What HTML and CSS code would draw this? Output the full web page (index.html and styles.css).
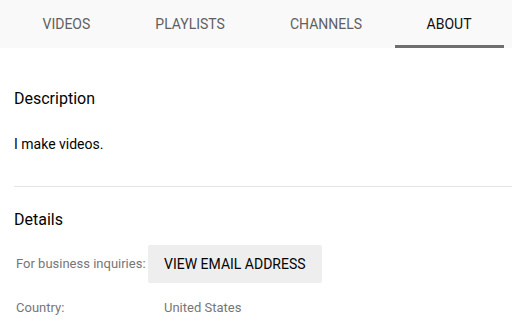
FILE: index.html
```html
<!DOCTYPE html>
<html lang="en">
<head>
  <meta charset="UTF-8" />
  <meta name="viewport" content="width=device-width, initial-scale=1.0">
  <title>About</title>

  <link rel="stylesheet" href="styles.css">
</head>

<body>

  <div class="tabs">
    <div class="tab">Videos</div>
    <div class="tab">Playlists</div>
    <div class="tab">Channels</div>
    <div class="tab active">About</div>
  </div>

  <div class="about">
    <h2 class="section-title">Description</h2>
    <p class="description">I make videos.</p>

    <hr class="divider">

    <h2 class="section-title details-title">Details</h2>
    <div class="details">
      <div class="label">For business inquiries:</div>
      <div class="value"><button class="email-btn">View email address</button></div>

      <div class="label">Country:</div>
      <div class="value text">United States</div>
    </div>
  </div>

</body>
</html>
```

FILE: styles.css
```css
body {
  background-color: white;
  margin: 0;
  padding: 0;
  font-family: Roboto, "Liberation Sans", Arial, sans-serif;
  color: #030303;
}

.tabs {
  display: flex;
  height: 48px;
  padding-left: 10px;
  background-color: #f9f9f9;
}

.tab {
  display: flex;
  align-items: center;
  justify-content: center;
  padding: 0 32.5px;
  font-size: 14px;
  text-transform: uppercase;
  color: #606060;
  border-bottom: 3px solid transparent;
  box-sizing: border-box;
  padding-top: 2px;
}

.tab.active {
  color: #0f0f0f;
  border-bottom-color: #6f6f6f;
  padding-left: 32px;
  padding-right: 32px;
}

.about {
  padding: 41px 0 0 14px;
}

.section-title {
  margin: 0;
  font-size: 16px;
  font-weight: 400;
  line-height: 20px;
}

.description {
  margin: 25px 0 0;
  font-size: 14px;
  line-height: 20px;
}

.divider {
  margin: 32px 0 0;
  border: 0;
  border-top: 1px solid #e5e5e5;
}

.details-title {
  margin-top: 23px;
}

.details {
  display: grid;
  grid-template-columns: 132px auto;
  align-items: center;
  row-gap: 15px;
  margin-top: 15px;
  padding-left: 2px;
  font-size: 13px;
  line-height: 20px;
}

.label {
  color: #767676;
}

.value.text {
  padding-left: 16px;
  color: #767676;
}

.email-btn {
  height: 38px;
  padding: 0 16px;
  border: 0;
  border-radius: 2px;
  background-color: #eeeeee;
  font-family: inherit;
  font-size: 14px;
  text-transform: uppercase;
  color: #030303;
}
```
